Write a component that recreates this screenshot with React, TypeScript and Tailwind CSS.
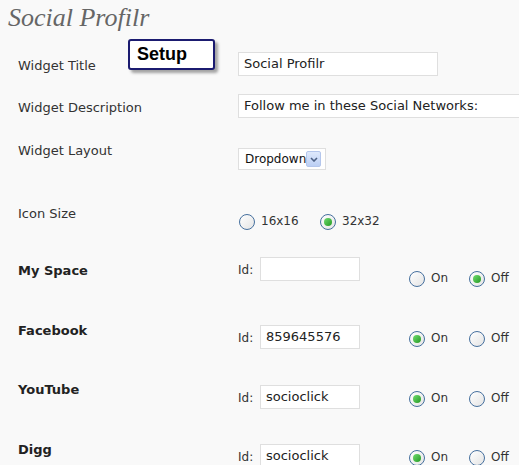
import type { ReactNode } from 'react';

const verdana = { fontFamily: '"DejaVu Sans", Verdana, sans-serif' };

const Radio = ({ checked }: { checked?: boolean }) => (
  <span className="relative inline-flex h-[16px] w-[16px] shrink-0 items-center justify-center rounded-full border-[1.5px] border-[#46709e] bg-gradient-to-br from-white to-[#e4e4e4]">
    {checked && (
      <span className="h-[8px] w-[8px] rounded-full bg-gradient-to-br from-[#6fdc6f] to-[#1f9a1f]" />
    )}
  </span>
);

const RadioOption = ({
  label,
  checked,
  className,
}: {
  label: string;
  checked?: boolean;
  className?: string;
}) => (
  <label className={`flex items-center gap-[6px] text-[12px] leading-[16px] text-[#333] ${className ?? ''}`}>
    <Radio checked={checked} />
    <span className="-mt-[2px]">{label}</span>
  </label>
);

const TextBox = ({ value, className }: { value: string; className: string }) => (
  <div
    className={`flex h-[24px] items-center border border-[#dfdfdf] bg-white pl-[5px] text-[13px] text-[#222] ${className}`}
  >
    {value}
  </div>
);

const Row = ({
  height,
  labelTop,
  label,
  bold,
  children,
}: {
  height: string;
  labelTop: string;
  label: string;
  bold?: boolean;
  children: ReactNode;
}) => (
  <div className={`flex ${height}`}>
    <div
      className={`w-[238px] shrink-0 pl-[18px] text-[13px] leading-[16px] ${labelTop} ${
        bold ? 'font-bold text-[#222]' : 'text-[#333]'
      }`}
    >
      {label}
    </div>
    <div className="flex-1">{children}</div>
  </div>
);

type Network = {
  name: string;
  id: string;
  on: boolean;
  labelTop: string;
  idTop: string;
  inputTop: string;
  radioTop: string;
};

const NETWORKS: Network[] = [
  { name: 'My Space', id: '', on: false, labelTop: 'pt-[17px]', idTop: 'pt-[16px]', inputTop: 'pt-[11px]', radioTop: 'pt-[25px]' },
  { name: 'Facebook', id: '859645576', on: true, labelTop: 'pt-[17px]', idTop: 'pt-[24px]', inputTop: 'pt-[19px]', radioTop: 'pt-[23px]' },
  { name: 'YouTube', id: 'socioclick', on: true, labelTop: 'pt-[16px]', idTop: 'pt-[24px]', inputTop: 'pt-[19px]', radioTop: 'pt-[23px]' },
  { name: 'Digg', id: 'socioclick', on: true, labelTop: 'pt-[16px]', idTop: 'pt-[23px]', inputTop: 'pt-[18px]', radioTop: 'pt-[22px]' },
];

export default function App() {
  return (
    <div className="relative h-[465px] w-[519px] overflow-hidden bg-[#f9f9f9]" style={verdana}>
      {/* Title */}
      <div className="h-[40px] pl-[8px] pt-[2px]">
        <h2
          className="text-[26px] italic leading-[32px] text-[#666]"
          style={{ fontFamily: '"Liberation Serif", Georgia, serif' }}
        >
          Social Profilr
        </h2>
      </div>

      {/* Setup callout */}
      <div
        className="absolute left-[128px] top-[39px] flex h-[31px] w-[87px] items-center rounded-[3px] border-2 border-[#1b1b70] bg-white pl-[7px] text-[18px] font-bold text-black shadow-[3px_3px_3px_rgba(0,0,0,0.35)]"
        style={{ fontFamily: '"Liberation Sans", Arial, sans-serif' }}
      >
        Setup
      </div>

      <Row height="h-[44px]" labelTop="pt-[18px]" label="Widget Title">
        <div className="pt-[12px]">
          <TextBox value="Social Profilr" className="w-[200px]" />
        </div>
      </Row>

      <Row height="h-[44px]" labelTop="pt-[16px]" label="Widget Description">
        <div className="pt-[10px]">
          <TextBox value="Follow me in these Social Networks:" className="w-[300px]" />
        </div>
      </Row>

      <Row height="h-[62px]" labelTop="pt-[15px]" label="Widget Layout">
        <div className="pt-[20px]">
          <div className="flex h-[22px] w-[88px] items-center justify-between border border-[#dfdfdf] bg-white pl-[6px] pr-[4px] text-[12px] text-[#111]">
            <span>Dropdown</span>
            <span className="flex h-[16px] w-[17px] items-center justify-center rounded-[2px] border border-[#b4c6ec] bg-gradient-to-b from-[#dfe9fc] to-[#bccff4]">
              <svg width="8" height="5" viewBox="0 0 8 5">
                <path d="M1 1 L4 4 L7 1" fill="none" stroke="#4d6185" strokeWidth="1.6" />
              </svg>
            </span>
          </div>
        </div>
      </Row>

      <Row height="h-[56px]" labelTop="pt-[16px]" label="Icon Size">
        <div className="flex pl-[1px] pt-[24px]">
          <RadioOption label="16x16" className="w-[81px]" />
          <RadioOption label="32x32" checked />
        </div>
      </Row>

      {NETWORKS.map((n) => (
        <Row key={n.name} height="h-[60px]" labelTop={n.labelTop} label={n.name} bold>
          <div className="flex">
            <span className={`w-[22px] text-[12px] leading-[16px] text-[#333] ${n.idTop}`}>Id:</span>
            <div className={n.inputTop}>
              <TextBox value={n.id} className="w-[100px]" />
            </div>
            <div className={`flex pl-[49px] ${n.radioTop}`}>
              <RadioOption label="On" checked={n.on} className="w-[60px]" />
              <RadioOption label="Off" checked={!n.on} />
            </div>
          </div>
        </Row>
      ))}
    </div>
  );
}
